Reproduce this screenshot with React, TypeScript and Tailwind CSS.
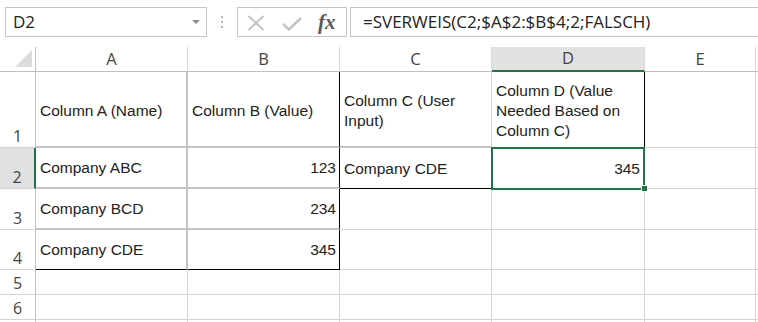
import React from "react";

const HDR = "font-['Open_Sans',sans-serif] text-[#444]";
const CELL = "font-['Liberation_Sans',Arial,sans-serif] text-[15.5px] leading-[20px] text-[#222]";

function FormulaBar() {
  return (
    <div className="flex h-[47px] items-start bg-white pt-[7px]">
      <div className="ml-[5px] flex h-[30px] w-[202px] items-center justify-between border border-[#c6c6c6] pl-[7px] pr-[6px]">
        <span className="font-['Open_Sans',sans-serif] text-[17px] text-[#222]">D2</span>
        <svg width="8" height="5" viewBox="0 0 8 5">
          <path d="M0 0 L8 0 L4 4 Z" fill="#8a8a8a" />
        </svg>
      </div>
      <div className="flex h-[30px] w-[30px] flex-col items-center justify-center gap-[3px]">
        <span className="h-[2px] w-[2px] bg-[#b5b5b5]" />
        <span className="h-[2px] w-[2px] bg-[#b5b5b5]" />
        <span className="h-[2px] w-[2px] bg-[#b5b5b5]" />
      </div>
      <div className="flex h-[30px] w-[110px] items-center border border-[#c6c6c6] pl-[9px]">
        <svg width="18" height="16" viewBox="0 0 18 16" className="mt-[2px]">
          <path d="M1.5 1 L16.5 15 M16.5 1 L1.5 15" stroke="#c4c4c4" strokeWidth="2" fill="none" />
        </svg>
        <svg width="20" height="14" viewBox="0 0 20 14" className="ml-[17px] mt-[3px]">
          <path d="M1 7 L7 12.5 L19 1" stroke="#c4c4c4" strokeWidth="2.6" fill="none" />
        </svg>
        <span className="ml-[16px] font-['Liberation_Serif',serif] text-[21px] font-bold italic leading-none text-[#5a5a5a]">
          fx
        </span>
      </div>
      <div className="ml-[3px] flex h-[30px] flex-1 items-center border border-r-0 border-[#c6c6c6] pl-[12px]">
        <span className="font-['Open_Sans',sans-serif] text-[17px] text-[#222]">=SVERWEIS(C2;$A$2:$B$4;2;FALSCH)</span>
      </div>
    </div>
  );
}

function RowHdr({ n, h, active }: { n: string; h: string; active?: boolean }) {
  return (
    <div
      className={
        active
          ? `flex w-[36px] shrink-0 items-end justify-center border-b border-r-2 border-b-[#d4d4d4] border-r-[#217346] bg-[#e1e1e1] ${h} ${HDR} text-[16px] leading-[22px]`
          : `flex w-[36px] shrink-0 items-end justify-center border-b border-r border-b-[#d4d4d4] border-r-[#c0c0c0] bg-white ${h} ${HDR} text-[16px] leading-[22px]`
      }
    >
      {n}
    </div>
  );
}

export default function App() {
  return (
    <div className="h-[322px] w-[758px] overflow-hidden bg-white">
      <FormulaBar />
      <div className="relative">
        {/* column headers */}
        <div className="flex h-[25px]">
          <div className="flex w-[36px] shrink-0 items-end justify-end border-b border-r border-b-[#c0c0c0] border-r-[#c0c0c0] pb-[4px] pr-[3px]">
            <svg width="17" height="17" viewBox="0 0 17 17">
              <path d="M17 0 L17 17 L0 17 Z" fill="#dcdcdc" />
            </svg>
          </div>
          <div className={`flex w-[152px] shrink-0 items-center justify-center border-b border-r border-b-[#c0c0c0] border-r-[#d8d8d8] ${HDR} text-[16.5px]`}>A</div>
          <div className={`flex w-[152px] shrink-0 items-center justify-center border-b border-r border-b-[#c0c0c0] border-r-[#d8d8d8] ${HDR} text-[16.5px]`}>B</div>
          <div className={`flex w-[152px] shrink-0 items-center justify-center border-b border-r border-b-[#c0c0c0] border-r-[#d8d8d8] ${HDR} text-[16.5px]`}>C</div>
          <div className={`flex w-[153px] shrink-0 items-center justify-center border-b-2 border-r border-b-[#217346] border-r-[#d8d8d8] bg-[#e1e1e1] ${HDR} text-[16.5px]`}>D</div>
          <div className={`flex w-[111px] shrink-0 items-center justify-center border-b border-r border-b-[#c0c0c0] border-r-[#d8d8d8] ${HDR} text-[16.5px]`}>E</div>
          <div className="flex-1 border-b border-b-[#c0c0c0]" />
        </div>

        {/* row 1 */}
        <div className="flex h-[76px]">
          <RowHdr n="1" h="h-[76px]" />
          <div className={`flex w-[152px] shrink-0 items-center border-b-2 border-r-2 border-[#c3c3c3] pl-[4px] pt-[3px] ${CELL}`}>Column A (Name)</div>
          <div className={`flex w-[152px] shrink-0 items-center border-b-2 border-r border-b-[#c3c3c3] border-r-black pl-[4px] pt-[3px] ${CELL}`}>Column B (Value)</div>
          <div className={`flex w-[152px] shrink-0 items-center border-b-2 border-r border-b-[#c3c3c3] border-r-[#d4d4d4] pl-[4px] pt-[3px] ${CELL}`}>
            <span>
              Column C (User
              <br />
              Input)
            </span>
          </div>
          <div className={`flex w-[153px] shrink-0 items-center border-b border-r border-b-[#d4d4d4] border-r-black pl-[4px] pt-[3px] ${CELL}`}>
            <span>
              Column D (Value
              <br />
              Needed Based on
              <br />
              Column C)
            </span>
          </div>
          <div className="w-[111px] shrink-0 border-b border-r border-[#d4d4d4]" />
          <div className="flex-1 border-b border-[#d4d4d4]" />
        </div>

        {/* row 2 */}
        <div className="flex h-[41px]">
          <RowHdr n="2" h="h-[41px]" active />
          <div className={`flex w-[152px] shrink-0 items-center border-b-2 border-r-2 border-[#c3c3c3] pl-[4px] pt-[1px] ${CELL}`}>Company ABC</div>
          <div className={`flex w-[152px] shrink-0 items-center justify-end border-b-2 border-r border-b-[#c3c3c3] border-r-black pr-[3px] pt-[1px] ${CELL}`}>123</div>
          <div className={`flex w-[152px] shrink-0 items-center border-b border-r border-b-black border-r-[#d4d4d4] pl-[4px] pt-[1px] ${CELL}`}>Company CDE</div>
          <div className={`flex w-[153px] shrink-0 items-center justify-end border-b border-r border-[#d4d4d4] pr-[4px] pt-[1px] ${CELL}`}>345</div>
          <div className="w-[111px] shrink-0 border-b border-r border-[#d4d4d4]" />
          <div className="flex-1 border-b border-[#d4d4d4]" />
        </div>

        {/* row 3 */}
        <div className="flex h-[41px]">
          <RowHdr n="3" h="h-[41px]" />
          <div className={`flex w-[152px] shrink-0 items-center border-b-2 border-r-2 border-[#c3c3c3] pl-[4px] pt-[1px] ${CELL}`}>Company BCD</div>
          <div className={`flex w-[152px] shrink-0 items-center justify-end border-b-2 border-r border-b-[#c3c3c3] border-r-black pr-[3px] pt-[1px] ${CELL}`}>234</div>
          <div className="w-[152px] shrink-0 border-b border-r border-[#d4d4d4]" />
          <div className="w-[153px] shrink-0 border-b border-r border-[#d4d4d4]" />
          <div className="w-[111px] shrink-0 border-b border-r border-[#d4d4d4]" />
          <div className="flex-1 border-b border-[#d4d4d4]" />
        </div>

        {/* row 4 */}
        <div className="flex h-[40px]">
          <RowHdr n="4" h="h-[40px]" />
          <div className={`flex w-[152px] shrink-0 items-center border-b border-r-2 border-b-black border-r-[#c3c3c3] pl-[4px] pt-[1px] ${CELL}`}>Company CDE</div>
          <div className={`flex w-[152px] shrink-0 items-center justify-end border-b border-r border-black pr-[3px] pt-[1px] ${CELL}`}>345</div>
          <div className="w-[152px] shrink-0 border-b border-r border-[#d4d4d4]" />
          <div className="w-[153px] shrink-0 border-b border-r border-[#d4d4d4]" />
          <div className="w-[111px] shrink-0 border-b border-r border-[#d4d4d4]" />
          <div className="flex-1 border-b border-[#d4d4d4]" />
        </div>

        {/* rows 5, 6, 7 */}
        {["5", "6"].map((n) => (
          <div key={n} className="flex h-[25px]">
            <RowHdr n={n} h="h-[25px]" />
            <div className="w-[152px] shrink-0 border-b border-r border-[#d4d4d4]" />
            <div className="w-[152px] shrink-0 border-b border-r border-[#d4d4d4]" />
            <div className="w-[152px] shrink-0 border-b border-r border-[#d4d4d4]" />
            <div className="w-[153px] shrink-0 border-b border-r border-[#d4d4d4]" />
            <div className="w-[111px] shrink-0 border-b border-r border-[#d4d4d4]" />
            <div className="flex-1 border-b border-[#d4d4d4]" />
          </div>
        ))}
        <div className="flex h-[25px]">
          <div className="w-[36px] shrink-0 border-r border-[#c0c0c0]" />
          <div className="w-[152px] shrink-0 border-r border-[#d4d4d4]" />
          <div className="w-[152px] shrink-0 border-r border-[#d4d4d4]" />
          <div className="w-[152px] shrink-0 border-r border-[#d4d4d4]" />
          <div className="w-[153px] shrink-0 border-r border-[#d4d4d4]" />
          <div className="w-[111px] shrink-0 border-r border-[#d4d4d4]" />
        </div>

        {/* selection overlay */}
        <div className="pointer-events-none absolute left-[491px] top-[100px] h-[43px] w-[154px] border-2 border-[#217346]" />
        <div className="pointer-events-none absolute left-[641px] top-[138px] h-[7px] w-[7px] border border-white bg-[#217346]" />
      </div>
    </div>
  );
}
